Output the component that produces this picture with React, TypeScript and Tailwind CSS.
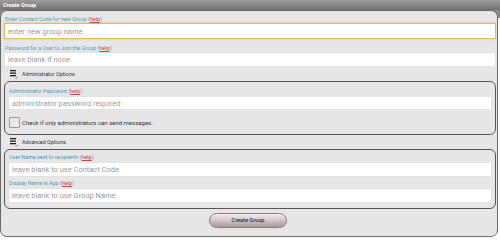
import React from 'react';

const font = { fontFamily: 'Roboto, "Liberation Sans", sans-serif' };

function Help() {
  return (
    <>
      {' ('}
      <span className="text-[#d83a3a] underline">help</span>
      {')'}
    </>
  );
}

function Label({ text }: { text: string }) {
  return (
    <div className="h-[8px] text-[5.4px] leading-[8px] text-[#4a9cc4] whitespace-nowrap pl-[1px]">
      {text}
      <Help />
    </div>
  );
}

function Field({ placeholder, focus, h = 'h-[15px]' }: { placeholder: string; focus?: boolean; h?: string }) {
  return (
    <input
      readOnly
      placeholder={placeholder}
      className={`block w-full ${h} bg-white px-[3px] text-[7.5px] outline-none placeholder:text-[#9b9b9b] ${
        focus ? 'border border-[#f0b460] shadow-[0_0_2px_#f5c07a]' : 'border border-[#e2e2e2]'
      }`}
    />
  );
}

function MenuIcon() {
  return (
    <svg width="14" height="14" viewBox="0 0 14 14" className="shrink-0">
      <rect x="3" y="3" width="6" height="1.3" fill="#222" />
      <rect x="3" y="5.5" width="6" height="1.3" fill="#222" />
      <rect x="3" y="8" width="6" height="1.3" fill="#222" />
      <path d="M9 11.5 L10.5 10" stroke="#333" strokeWidth="0.8" />
    </svg>
  );
}

function Section({ title }: { title: string }) {
  return (
    <div className="h-[14px] flex items-center gap-[1px] pl-[3px]">
      <MenuIcon />
      <span className="text-[5.4px] text-[#333]">{title}</span>
    </div>
  );
}

export default function App() {
  return (
    <div
      className="w-[500px] h-[250px] bg-[linear-gradient(#9c9c9c,#707070_10px,#8a8a8a_10px,#8a8a8a_18px,#ffffff_18px)] overflow-hidden"
      style={font}
    >
      <div className="h-[10px] pl-[3px] text-[5.6px] leading-[10px] font-bold text-white">Create Group</div>
      <div className="w-[498px] h-[227px] rounded-[7px] border border-[#6a6a6a] bg-[#e6e6e6] pl-[3px] pr-[1px] pt-[4px]">
        <Label text="Enter Contact Code for new Group" />
        <Field placeholder="enter new group name" focus h="h-[16px]" />
        <div className="mt-[5px]">
          <Label text="Password for a User to Join the Group" />
        </div>
        <Field placeholder="leave blank if none" />
        <Section title="Administrator Options" />
        <div className="w-[492px] rounded-[6px] border border-[#555] pl-[3px] pr-[3px] pt-[5px] pb-[6px]">
          <Label text="Administrator Password" />
          <div className="mt-[1px]">
            <Field placeholder="administrator password required" h="h-[14px]" />
          </div>
          <div className="mt-[6px] flex items-center h-[12px] gap-[2px] pl-[1px]">
            <div className="w-[11px] h-[11px] rounded-[1px] border border-[#9a9a9a] bg-[#e9e9e9]" />
            <span className="text-[6px] text-[#333]">Check if only administrators can send messages.</span>
          </div>
        </div>
        <Section title="Advanced Options" />
        <div className="w-[492px] rounded-[6px] border border-[#555] pl-[3px] pr-[3px] pt-[3px] pb-[5px]">
          <Label text="User Name sent to recipients" />
          <div className="mt-[1px]">
            <Field placeholder="leave blank to use Contact Code" />
          </div>
          <div className="mt-[2px]">
            <Label text="Display Name in App" />
          </div>
          <div className="mt-[1px]">
            <Field placeholder="leave blank to use Group Name" />
          </div>
        </div>
        <div className="mt-[4px] flex justify-center pr-[4px]">
          <button className="w-[78px] h-[15px] rounded-full border border-[#8c8080] bg-[linear-gradient(#f2ecec,#d6caca_45%,#a99696)] text-[5.6px] text-[#2a2a2a] font-medium">
            Create Group
          </button>
        </div>
      </div>
    </div>
  );
}
